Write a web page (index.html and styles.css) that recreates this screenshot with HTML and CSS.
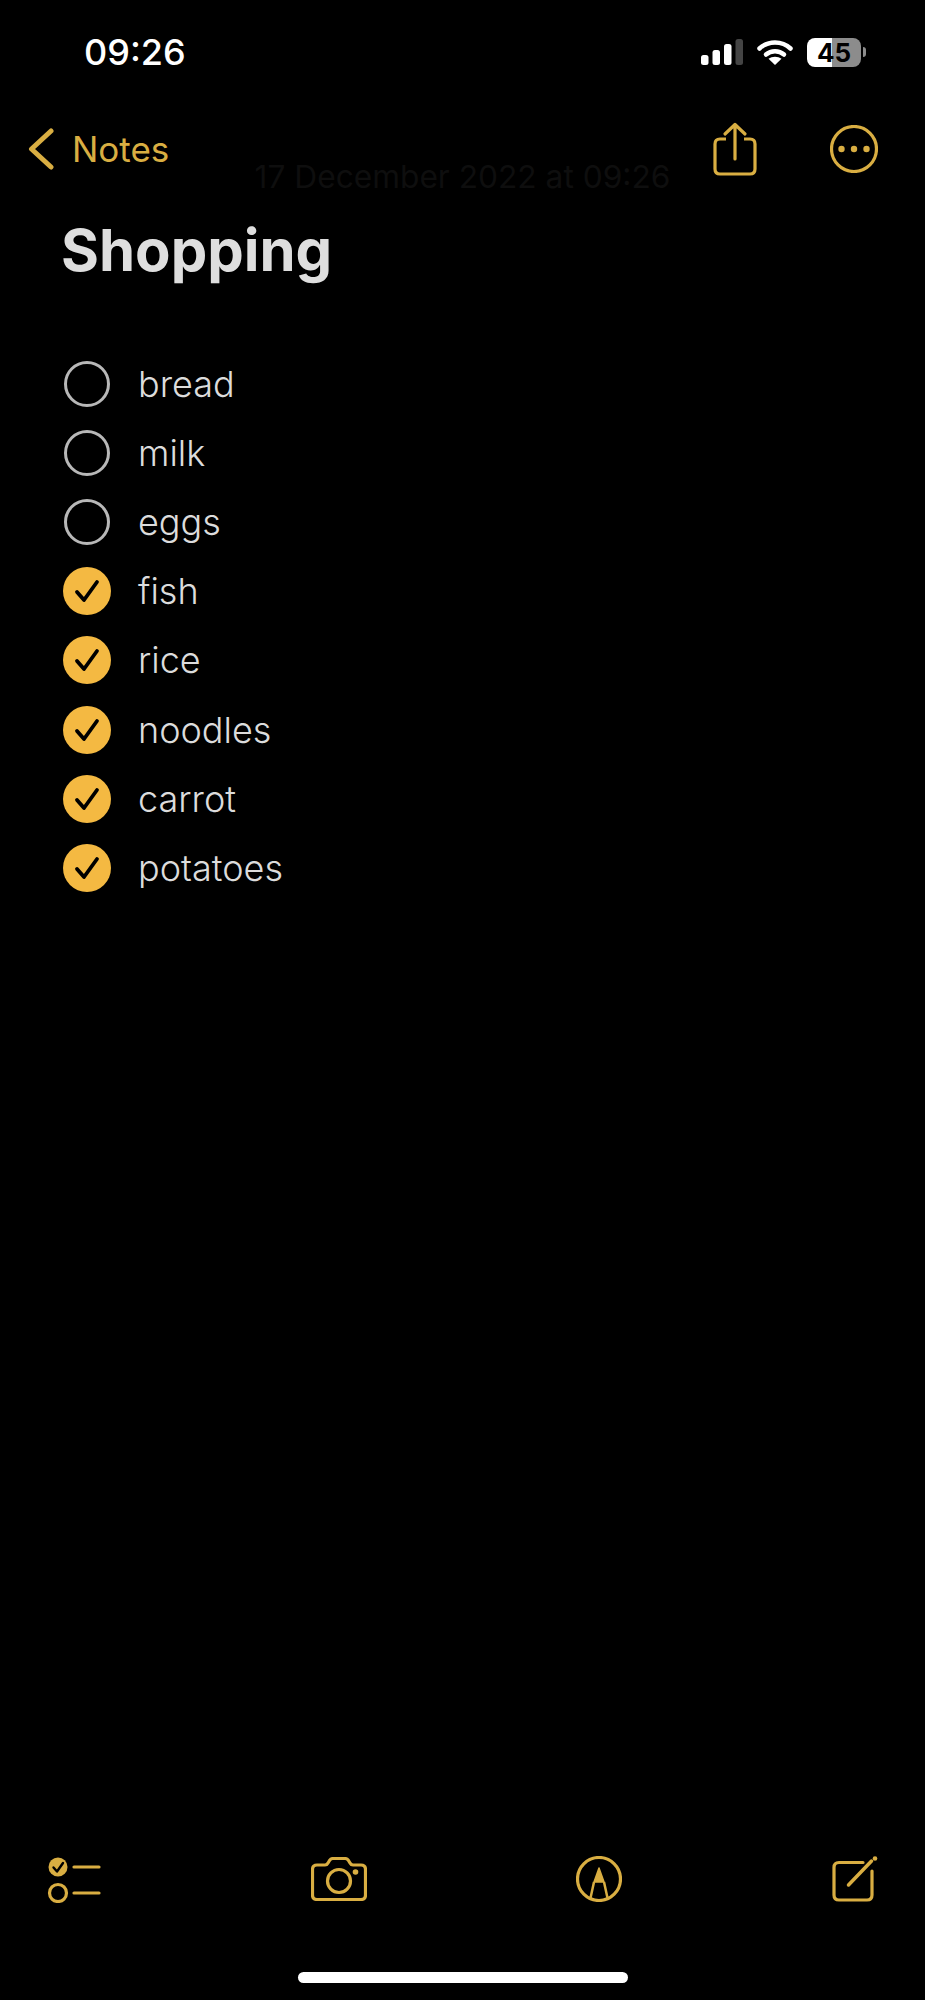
FILE: index.html
```html
<!DOCTYPE html>
<html lang="en">
<head>
  <meta charset="UTF-8">
  <meta name="viewport" content="width=device-width, initial-scale=1.0">
  <title>Shopping</title>
  <link rel="stylesheet" href="styles.css">
</head>
<body>

  <div class="screen">
    <!-- Status bar -->
    <div class="status-bar">
      <span class="time">09:26</span>
      <div class="status-icons">
        <svg class="signal" width="42" height="26" viewBox="0 0 42 26">
          <rect x="0" y="16" width="7.5" height="10" rx="2.5" fill="#fff"/>
          <rect x="11.5" y="11" width="7.5" height="15" rx="2.5" fill="#fff"/>
          <rect x="23" y="5" width="7.5" height="21" rx="2.5" fill="#fff"/>
          <rect x="34.5" y="0" width="7.5" height="26" rx="2.5" fill="#444"/>
        </svg>
        <svg class="wifi" width="36" height="26" viewBox="0 0 36 26">
          <path d="M2.5 9.5 C11 1.5 25 1.5 33.500 9.500" fill="none" stroke="#fff" stroke-width="4.500" stroke-linecap="round"/>
          <path d="M9 15.500 C14 11 22 11 27 15.500" fill="none" stroke="#fff" stroke-width="4.500" stroke-linecap="round"/>
          <path d="M18 26 L11.500 19.800 C15 17 21 17 24.500 19.800 Z" fill="#fff"/>
        </svg>
        <div class="battery">
          <div class="battery-body"><span>45</span></div>
          <div class="battery-nub"></div>
        </div>
      </div>
    </div>

    <!-- Nav bar -->
    <div class="nav-bar">
      <div class="back">
        <svg width="26" height="42" viewBox="0 0 26 42">
          <path d="M23 3 L3.500 21 L23 39" fill="none" stroke="#d9ae42" stroke-width="5" stroke-linecap="round" stroke-linejoin="round"/>
        </svg>
        <span>Notes</span>
      </div>
      <div class="nav-actions">
        <svg width="44" height="54" viewBox="0 0 44 54">
          <path d="M13 17 H7 Q2 17 2 22 V47 Q2 52 7 52 H37 Q42 52 42 47 V22 Q42 17 37 17 H31" fill="none" stroke="#d9ae42" stroke-width="3.200"/>
          <path d="M22 37 V3 M12 12 L22 2.500 L32 12" fill="none" stroke="#d9ae42" stroke-width="3.200" stroke-linecap="round" stroke-linejoin="round"/>
        </svg>
        <svg width="48" height="48" viewBox="0 0 48 48">
          <circle cx="24" cy="24" r="22.500" fill="none" stroke="#d9ae42" stroke-width="3.200"/>
          <circle cx="11.500" cy="24" r="3.200" fill="#d9ae42"/>
          <circle cx="24" cy="24" r="3.200" fill="#d9ae42"/>
          <circle cx="36.500" cy="24" r="3.200" fill="#d9ae42"/>
        </svg>
      </div>
    </div>

    <div class="date">17 December 2022 at 09:26</div>

    <!-- Note -->
    <h1 class="title">Shopping</h1>

    <ul class="checklist">
      <li class="item"><span class="circle"></span>bread</li>
      <li class="item"><span class="circle"></span>milk</li>
      <li class="item"><span class="circle"></span>eggs</li>
      <li class="item">
        <svg class="tick" width="48" height="48" viewBox="0 0 48 48"><circle cx="24" cy="24" r="24" fill="#f4b942"/><path d="M14 25 L21 33 L34 15" fill="none" stroke="#000" stroke-width="3.800" stroke-linecap="round" stroke-linejoin="round"/></svg>
        fish
      </li>
      <li class="item">
        <svg class="tick" width="48" height="48" viewBox="0 0 48 48"><circle cx="24" cy="24" r="24" fill="#f4b942"/><path d="M14 25 L21 33 L34 15" fill="none" stroke="#000" stroke-width="3.800" stroke-linecap="round" stroke-linejoin="round"/></svg>
        rice
      </li>
      <li class="item">
        <svg class="tick" width="48" height="48" viewBox="0 0 48 48"><circle cx="24" cy="24" r="24" fill="#f4b942"/><path d="M14 25 L21 33 L34 15" fill="none" stroke="#000" stroke-width="3.800" stroke-linecap="round" stroke-linejoin="round"/></svg>
        noodles
      </li>
      <li class="item">
        <svg class="tick" width="48" height="48" viewBox="0 0 48 48"><circle cx="24" cy="24" r="24" fill="#f4b942"/><path d="M14 25 L21 33 L34 15" fill="none" stroke="#000" stroke-width="3.800" stroke-linecap="round" stroke-linejoin="round"/></svg>
        carrot
      </li>
      <li class="item">
        <svg class="tick" width="48" height="48" viewBox="0 0 48 48"><circle cx="24" cy="24" r="24" fill="#f4b942"/><path d="M14 25 L21 33 L34 15" fill="none" stroke="#000" stroke-width="3.800" stroke-linecap="round" stroke-linejoin="round"/></svg>
        potatoes
      </li>
    </ul>

    <!-- Toolbar -->
    <div class="toolbar">
      <svg width="54" height="48" viewBox="0 0 54 48">
        <circle cx="11" cy="12" r="9.500" fill="#d9ae42"/>
        <path d="M6.500 12.500 L10 16.500 L16 8" fill="none" stroke="#000" stroke-width="2.400" stroke-linecap="round" stroke-linejoin="round"/>
        <circle cx="11" cy="38" r="8.500" fill="none" stroke="#d9ae42" stroke-width="3.200"/>
        <path d="M27 12 H52 M27 38 H52" fill="none" stroke="#d9ae42" stroke-width="3.200" stroke-linecap="round"/>
      </svg>
      <svg width="56" height="44" viewBox="0 0 56 44">
        <path d="M6 8 H14 Q16 8 17 6 L18.500 3.500 Q20 1.500 22 1.500 H34 Q36 1.500 37.500 3.500 L39 6 Q40 8 42 8 H50 Q54.500 8 54.500 12.500 V38 Q54.500 42.500 50 42.500 H6 Q1.500 42.500 1.500 38 V12.500 Q1.500 8 6 8 Z" fill="none" stroke="#d9ae42" stroke-width="3.200" stroke-linejoin="round"/>
        <circle cx="28" cy="24" r="11.500" fill="none" stroke="#d9ae42" stroke-width="3.200"/>
        <circle cx="44.500" cy="15" r="2.800" fill="#d9ae42"/>
      </svg>
      <svg width="46" height="46" viewBox="0 0 46 46">
        <circle cx="23" cy="23" r="21.500" fill="none" stroke="#d9ae42" stroke-width="3.200"/>
        <path d="M23 12 L28 26 H18 Z" fill="#d9ae42" stroke="#d9ae42" stroke-width="1.500" stroke-linejoin="round"/>
        <path d="M18 26 L14.500 42 M28 26 L31.500 42" fill="none" stroke="#d9ae42" stroke-width="2.500"/>
      </svg>
      <svg width="46" height="46" viewBox="0 0 46 46">
        <path d="M31 6.500 H7 Q2 6.500 2 11.500 V39 Q2 44 7 44 H35 Q40 44 40 39 V15" fill="none" stroke="#d9ae42" stroke-width="3.200" stroke-linecap="round"/>
        <path d="M16.500 29 L39.500 5" fill="none" stroke="#d9ae42" stroke-width="3.500" stroke-linecap="round"/>
        <circle cx="43" cy="2.500" r="2.300" fill="#d9ae42"/>
      </svg>
    </div>

    <div class="home-indicator"></div>
  </div>

</body>
</html>
```

FILE: styles.css
```css
/* General Styles */
* {
  box-sizing: border-box;
  margin: 0;
  padding: 0;
}

body {
  font-family: Inter, "Liberation Sans", sans-serif;
  background-color: #000;
}

.screen {
  position: relative;
  display: flex;
  flex-direction: column;
  width: 925px;
  height: 2000px;
  overflow: hidden;
}

/* Status Bar */
.status-bar {
  display: flex;
  justify-content: space-between;
  align-items: center;
  height: 30px;
  margin-top: 37px;
  padding: 0 59px 0 84px;
}

.time {
  color: #fff;
  font-size: 36px;
  font-weight: 500;
}

.status-icons {
  display: flex;
  align-items: center;
  gap: 14px;
}

.battery {
  display: flex;
  align-items: center;
  gap: 2px;
}

.battery-body {
  display: flex;
  align-items: center;
  justify-content: center;
  width: 54px;
  height: 29px;
  border-radius: 8px;
  background: linear-gradient(to right, #fff 46%, #8c8c8c 46%);
}

.battery-body span {
  color: #000;
  font-size: 26px;
  font-weight: 700;
}

.battery-nub {
  width: 3px;
  height: 10px;
  border-radius: 0 3px 3px 0;
  background-color: #8c8c8c;
}

/* Nav Bar */
.nav-bar {
  display: flex;
  justify-content: space-between;
  align-items: center;
  height: 56px;
  margin-top: 54px;
  padding: 0 47px 0 28px;
}

.back {
  display: flex;
  align-items: center;
  gap: 18px;
  color: #d9ae42;
  font-size: 35px;
}

.nav-actions {
  display: flex;
  align-items: center;
  gap: 73px;
}

/* Date sits behind the nav bar, almost invisible */
.date {
  position: absolute;
  top: 157px;
  left: 0;
  width: 100%;
  text-align: center;
  color: #0e0e0e;
  font-size: 31.700px;
}

/* Note */
.title {
  margin-top: 38px;
  padding-left: 61px;
  color: #dedede;
  font-size: 58px;
  font-weight: 700;
  line-height: 70px;
}

.checklist {
  list-style: none;
  margin-top: 64px;
  padding-left: 63px;
}

.item {
  display: flex;
  align-items: center;
  gap: 27px;
  height: 69.200px;
  color: #dcdcdc;
  font-size: 36px;
  font-weight: 350;
}

.circle {
  width: 46px;
  height: 46px;
  margin-left: 1px;
  margin-right: 1px;
  border: 3px solid #b8b8b8;
  border-radius: 50%;
}

/* Toolbar */
.toolbar {
  display: flex;
  justify-content: space-between;
  align-items: center;
  margin-top: auto;
  padding: 0 47px;
}

.home-indicator {
  width: 330px;
  height: 11px;
  margin: 69px auto 17px;
  border-radius: 6px;
  background-color: #fff;
}
```
